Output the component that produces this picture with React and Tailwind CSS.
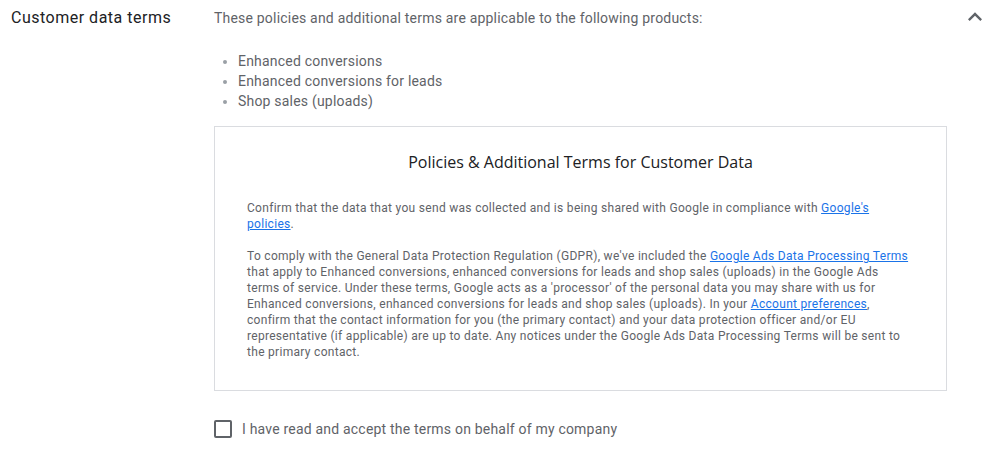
import React from "react";

const A = ({ children }) => (
  <a href="#" className="text-[#1a73e8] underline">{children}</a>
);

export default function App() {
  return (
    <div className="w-[1004px] h-[458px] bg-white font-['Roboto',sans-serif] flex">
      <div className="w-[214px] pl-[11px] pt-[7px] text-[16px] leading-[22px] tracking-[0.5px] text-[#202124]">
        Customer data terms
      </div>
      <div className="flex-1 flex flex-col">
        <div className="flex items-start pt-[8px]">
          <p className="flex-1 text-[14px] leading-[20px] tracking-[0.2px] text-[#5f6368]">
            These policies and additional terms are applicable to the following products:
          </p>
          <svg width="28" height="28" viewBox="0 0 24 24" className="mr-[15px] -mt-[5px]" fill="#5f6368">
            <path d="M12 8l-6 6 1.41 1.41L12 10.83l4.59 4.58L18 14z" />
          </svg>
        </div>
        <ul className="mt-[20px] ml-[24px] list-disc text-[14px] leading-[20px] tracking-[0.2px] text-[#5f6368] marker:text-[#9aa0a6]">
          <li>Enhanced conversions</li>
          <li>Enhanced conversions for leads</li>
          <li>Shop sales (uploads)</li>
        </ul>
        <div className="mt-[15px] w-[733px] h-[265px] border border-[#dadce0] px-[32px] pt-[23px]">
          <h2 className="text-center text-[16px] leading-[24px] text-[#202124] font-['Open_Sans',sans-serif]">
            Policies &amp; Additional Terms for Customer Data
          </h2>
          <div className="mt-[26px] text-[12px] leading-[16px] text-[#5f6368] tracking-[0.3px]">
            <p>
              Confirm that the data that you send was collected and is being shared with Google in compliance with <A>Google's policies</A>.
            </p>
            <p className="mt-[16px]">
              To comply with the General Data Protection Regulation (GDPR), we've included the <A>Google Ads Data Processing Terms</A> that apply to Enhanced conversions, enhanced conversions for leads and shop sales (uploads) in the Google Ads terms of service. Under these terms, Google acts as a 'processor' of the personal data you may share with us for Enhanced conversions, enhanced conversions for leads and shop sales (uploads). In your <A>Account preferences</A>, confirm that the contact information for you (the primary contact) and your data protection officer and/or EU representative (if applicable) are up to date. Any notices under the Google Ads Data Processing Terms will be sent to the primary contact.
            </p>
          </div>
        </div>
        <label className="mt-[28px] flex items-center gap-[10px] text-[14px] leading-[20px] tracking-[0.2px] text-[#5f6368]">
          <span className="w-[18px] h-[18px] border-2 border-[#5f6368] rounded-[2px]" />
          I have read and accept the terms on behalf of my company
        </label>
      </div>
    </div>
  );
}
